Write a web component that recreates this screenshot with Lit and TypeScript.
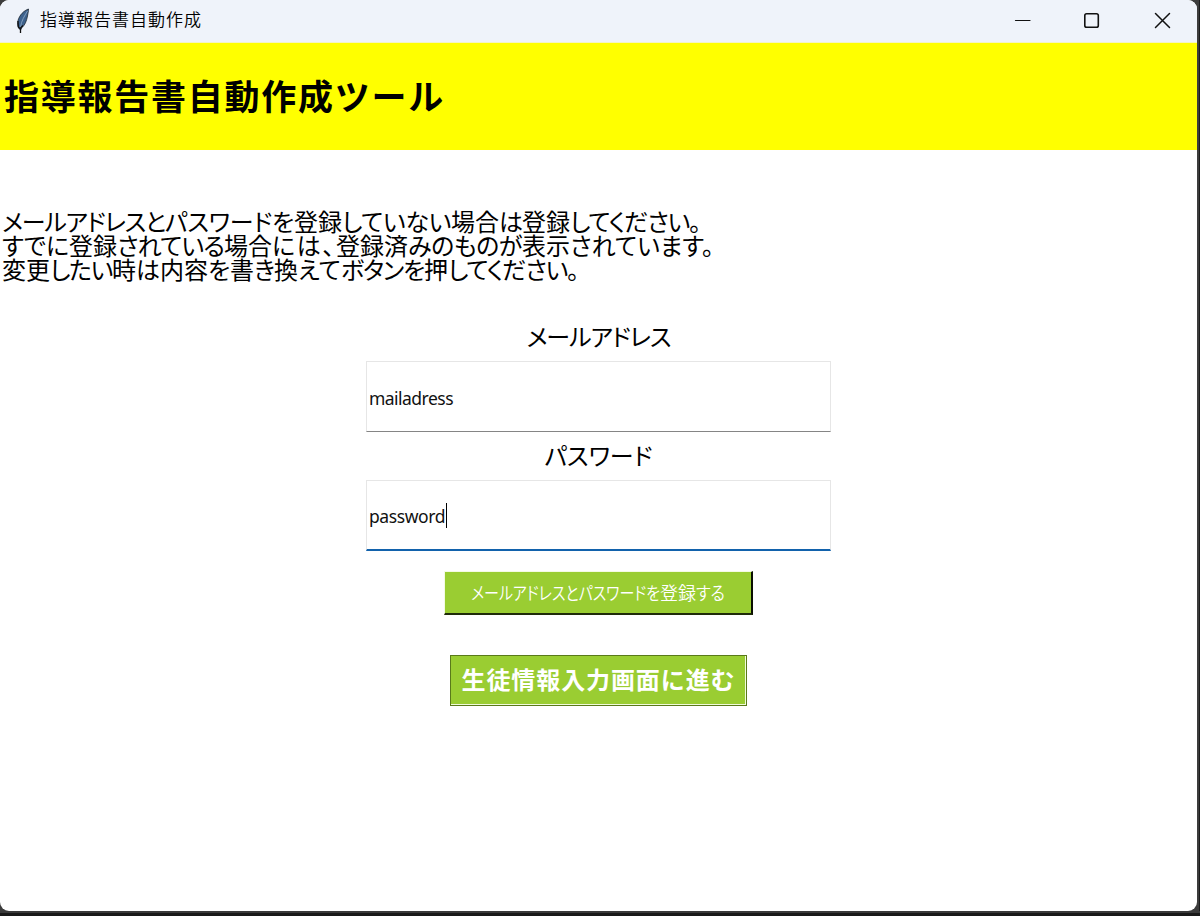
import { LitElement, html, css } from "lit";
import { customElement } from "lit/decorators.js";

// A text run and the advance width, in pixels, that it is set to.
type Run = [string, number];

const LINES: Run[][] = [
  [["メールアドレスと", 163], ["パスワード", 107], ["を", 22], ["登録", 48], ["していない", 109], ["場合", 48], ["は", 23], ["登録", 48], ["してください。", 130]],
  [["すでに", 67], ["登録", 48], ["されている", 107], ["場合", 48], ["には、", 64], ["登録済", 72], ["みのものが", 114], ["表示", 48], ["されています。", 144]],
  [["変更", 48], ["したい", 62], ["時", 24], ["は", 24], ["内容", 48], ["を", 22], ["書", 24], ["き", 20], ["換", 24], ["えて", 43], ["ボタンを", 83], ["押", 24], ["してください。", 130]],
];

@customElement("fit-text")
class FitText extends LitElement {
  static properties = { text: {}, width: { type: Number }, squeeze: { type: Boolean } };
  declare text: string;
  declare width: number;
  declare squeeze: boolean;

  static styles = css`
    :host { display: inline-block; white-space: nowrap; }
    .box { display: inline-block; white-space: nowrap; }
    .ink { display: inline-block; transform-origin: 0 50%; }
  `;

  render() {
    return html`<span class="box" style="width:${this.width}px"><span class="ink">${this.text}</span></span>`;
  }

  firstUpdated() {
    const fit = () => {
      const ink = this.renderRoot.querySelector(".ink") as HTMLElement;
      ink.style.letterSpacing = "0px";
      ink.style.transform = "none";
      const natural = ink.getBoundingClientRect().width;
      if (this.squeeze) ink.style.transform = `scaleX(${this.width / natural})`;
      else ink.style.letterSpacing = `${(this.width - natural) / this.text.length}px`;
    };
    fit();
    document.fonts.ready.then(fit);
  }
}

@customElement("app-root")
class AppRoot extends LitElement {
  static styles = css`
    * { box-sizing: border-box; }
    :host {
      display: block; width: 1200px; height: 916px; overflow: hidden;
      background: linear-gradient(90deg, #3c3c3c 0 1199px, #1c1c1c 1199px);
      font-family: "Noto Sans CJK JP", sans-serif; color: #000;
    }
    .desktop { height: 916px; background: linear-gradient(#0000 0 911px, #3a3a3a 911px 913px, #191919 913px); }
    .window {
      width: 1197px; height: 911px; border-radius: 9px; overflow: hidden;
      background: #fff; display: flex; flex-direction: column;
    }
    .bar { height: 43px; flex: none; background: #eff3fa; display: flex; align-items: center; border-bottom: 1px solid #f4f4c4; }
    .feather { width: 16px; height: 26px; margin: 0 9px 3px 15px; }
    .caption { flex: 1; font-size: 17px; line-height: 24px; font-weight: 350; margin-top: -4px; }
    .controls { display: flex; }
    .controls svg { width: 70px; height: 42px; display: block; }
    .banner { height: 107px; flex: none; background: #ff0; display: flex; align-items: center; padding: 0 0 4px 4px; }
    .banner h1 { margin: 0; font-size: 35px; line-height: 50px; font-weight: 700; }
    .intro { margin: 59px 0 0 2px; font-size: 24px; font-feature-settings: "palt"; }
    .line { height: 24px; line-height: 24px; display: flex; }
    .form { display: flex; flex-direction: column; align-items: center; margin-top: 43px; }
    .label { height: 24px; line-height: 24px; font-size: 24px; font-feature-settings: "palt"; }
    .field {
      width: 465px; height: 71px; margin-top: 13px; padding: 2px 0 0 2px;
      border: 1px solid #e6e6e6; border-bottom-color: #858585; background: #fff;
      display: flex; align-items: center;
      font: 17.5px "Noto Sans", "Open Sans", sans-serif; color: #111;
    }
    .gap { margin-top: 11px; }
    .field.focus { border-bottom: 2px solid #1262ac; }
    .caret { width: 1px; height: 25px; background: #000; margin: 0 0 1px 1px; }
    .save {
      width: 309px; height: 44px; margin-top: 20px; background: #9acd32; color: #fff;
      border: solid; border-width: 1px 2px 2px 1px; border-color: #f4fbe4 #0a0f02 #1f2b08 #f4fbe4;
      display: flex; justify-content: center; align-items: center; padding-bottom: 1px;
      font-size: 18px; line-height: 24px; font-weight: 350; font-feature-settings: "palt";
    }
    .next {
      width: 297px; height: 51px; margin-top: 40px; background: #9acd32; color: #fff;
      border: 1px solid #5a7a1a;
      box-shadow: inset -1px -1px #f2fbdc;
      display: flex; justify-content: center; align-items: center; padding-bottom: 4px;
      font-size: 24px; line-height: 30px; font-weight: 700;
    }
  `;

  render() {
    return html`<div class="desktop"><div class="window">
      <div class="bar">
        <svg class="feather" viewBox="0 0 16 26">
          <path d="M13.500 2C9 3.500 4.500 8 3 13.500C2.300 16.500 2.500 19 4 21.500L5.500 23L7 20.500C10 18 11.500 14 12.500 9C13 6 13.500 4 13.500 2Z" fill="#3d618c" stroke="#1b2430" stroke-width=".8"/>
          <path d="M12.500 4C9.500 9 6.500 13.500 5.500 20" fill="none" stroke="#9db8d2" stroke-width=".7"/>
          <path d="M3 14L3.300 20L5.500 22L5.500 26M5.500 21L8 18.500" fill="none" stroke="#111" stroke-width="1.300"/>
        </svg>
        <div class="caption"><fit-text text="指導報告書自動作成" .width=${162}></fit-text></div>
        <div class="controls">
          <svg viewBox="0 0 70 42"><path d="M28.500 20.500H43" stroke="#111" stroke-width="1.200" stroke-linecap="round"/></svg>
          <svg viewBox="0 0 70 42"><rect x="27.800" y="13.800" width="13.500" height="13.500" rx="1.800" fill="none" stroke="#111" stroke-width="1.600"/></svg>
          <svg viewBox="0 0 70 42"><path d="M28.500 13.500L42.500 27.500M42.500 13.500L28.500 27.500" stroke="#111" stroke-width="1.500" stroke-linecap="round"/></svg>
        </div>
      </div>
      <div class="banner"><h1><fit-text text="指導報告書自動作成ツール" .width=${441}></fit-text></h1></div>
      <div class="intro">
        ${LINES.map((line) => html`<div class="line">${line.map(([t, w]) => html`<fit-text text=${t} .width=${w}></fit-text>`)}</div>`)}
      </div>
      <div class="form">
        <div class="label"><fit-text text="メールアドレス" .width=${144}></fit-text></div>
        <div class="field"><fit-text text="mailadress" .width=${84}></fit-text></div>
        <div class="label gap"><fit-text text="パスワード" .width=${108}></fit-text></div>
        <div class="field focus"><fit-text text="password" .width=${76}></fit-text><span class="caret"></span></div>
        <div class="save">
          <fit-text text="メールアドレスとパスワードを" .width=${189} squeeze></fit-text>
          <fit-text text="登録" .width=${36}></fit-text>
          <fit-text text="する" .width=${29} squeeze></fit-text>
        </div>
        <div class="next"><fit-text text="生徒情報入力画面に進む" .width=${274}></fit-text></div>
      </div>
    </div></div>`;
  }
}
